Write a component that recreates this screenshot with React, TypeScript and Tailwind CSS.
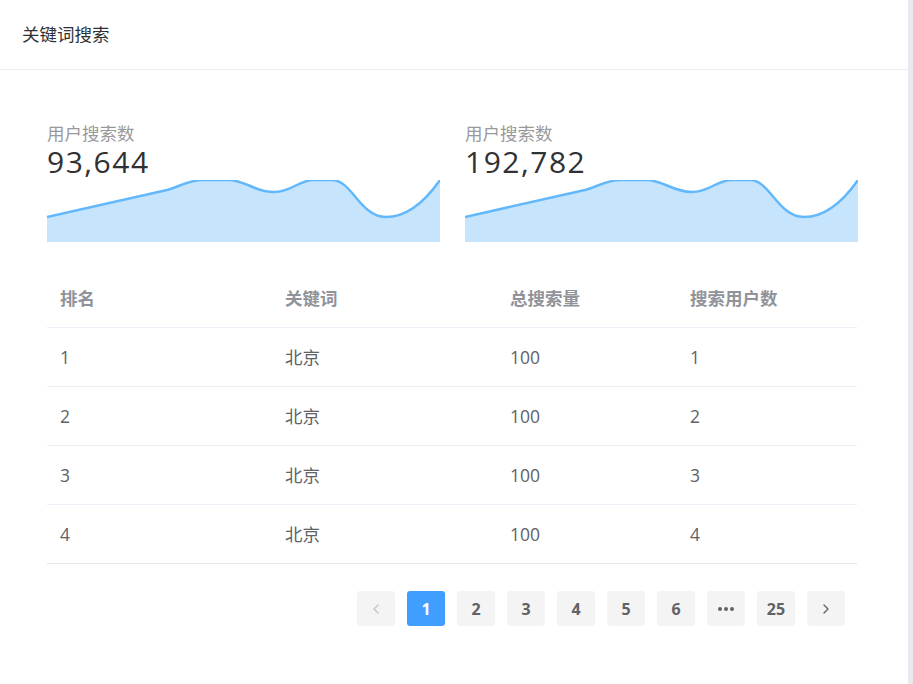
import { ChevronLeft, ChevronRight } from "lucide-react";

type Stat = { label: string; value: string };

const stats: Stat[] = [
  { label: "用户搜索数", value: "93,644" },
  { label: "用户搜索数", value: "192,782" },
];

const rows = [
  { rank: 1, word: "北京", total: 100, users: 1 },
  { rank: 2, word: "北京", total: 100, users: 2 },
  { rank: 3, word: "北京", total: 100, users: 3 },
  { rank: 4, word: "北京", total: 100, users: 4 },
];

const pages = ["1", "2", "3", "4", "5", "6", "…", "25"];

const font = { fontFamily: '"Open Sans", "Noto Sans CJK SC", sans-serif' };

// smooth area line, local coords 393 x 62
const linePath =
  "M0,37 L120,10 C134,6 142,0 156,0 L181,0 C199,0 207,12 227,12 C245,12 251,0 267,0 L285,0 C305,0 313,37 339,37 C360,37 379,20 393,0";

function MiniArea() {
  return (
    <svg width="393" height="62" viewBox="0 0 393 62" className="block">
      <path d={`${linePath} L393,62 L0,62 Z`} fill="#c6e5fd" />
      <path d={linePath} fill="none" stroke="#62b8fb" strokeWidth="2.5" />
    </svg>
  );
}

function StatCard({ stat }: { stat: Stat }) {
  return (
    <div className="w-[393px]">
      <div className="h-6 text-[17.5px] leading-6 text-[#999]">{stat.label}</div>
      <div className="h-[34px] text-[30px] leading-[34px] tracking-[1.5px] text-[#303133]">
        {stat.value}
      </div>
      <div className="mt-px">
        <MiniArea />
      </div>
    </div>
  );
}

function PageBtn({ children, active }: { children: React.ReactNode; active?: boolean }) {
  return (
    <div
      className={
        active
          ? "flex h-[35px] w-[38px] items-center justify-center rounded-[3px] bg-[#409eff] text-[16px] font-bold text-white"
          : "flex h-[35px] w-[38px] items-center justify-center rounded-[3px] bg-[#f4f4f5] text-[16px] font-bold text-[#606266]"
      }
    >
      {children}
    </div>
  );
}

export default function App() {
  return (
    <div className="flex h-[684px] w-[913px] bg-white" style={font}>
      <div className="w-[908px] bg-white">
        <div className="flex h-[70px] items-center border-b border-[#ebeef5] px-[22px] text-[17.5px] text-[#303133]">
          关键词搜索
        </div>
        <div className="pl-[47px] pr-[51px] pt-[51px]">
          <div className="flex gap-[25px]">
            {stats.map((s, i) => (
              <StatCard key={i} stat={s} />
            ))}
          </div>

          <div className="mt-[27px] border-b border-[#e4e7ed] text-[17.5px]">
            <div className="grid h-[59px] grid-cols-[225px_225px_180px_180px] items-center border-b border-[#ebeef5] font-bold text-[#909399]">
              <div className="px-[13px]">排名</div>
              <div className="px-[13px]">关键词</div>
              <div className="px-[13px]">总搜索量</div>
              <div className="px-[13px]">搜索用户数</div>
            </div>
            {rows.map((r, i) => (
              <div
                key={r.rank}
                className={
                  i < rows.length - 1
                    ? "grid h-[59px] grid-cols-[225px_225px_180px_180px] items-center border-b border-[#ebeef5] text-[#606266]"
                    : "grid h-[58px] grid-cols-[225px_225px_180px_180px] items-center text-[#606266]"
                }
              >
                <div className="px-[13px]">{r.rank}</div>
                <div className="px-[13px]">{r.word}</div>
                <div className="px-[13px]">{r.total}</div>
                <div className="px-[13px]">{r.users}</div>
              </div>
            ))}
          </div>

          <div className="mt-[27px] flex justify-end gap-[12px] pr-[12px]">
            <PageBtn>
              <ChevronLeft size={16} strokeWidth={2} className="text-[#c0c4cc]" />
            </PageBtn>
            {pages.map((p) => (
              <PageBtn key={p} active={p === "1"}>
                {p === "…" ? (
                  <span className="flex gap-[2px]">
                    <span className="h-[4px] w-[4px] rounded-full bg-[#606266]" />
                    <span className="h-[4px] w-[4px] rounded-full bg-[#606266]" />
                    <span className="h-[4px] w-[4px] rounded-full bg-[#606266]" />
                  </span>
                ) : (
                  p
                )}
              </PageBtn>
            ))}
            <PageBtn>
              <ChevronRight size={16} strokeWidth={2} className="text-[#606266]" />
            </PageBtn>
          </div>
        </div>
      </div>
      <div className="w-[5px] bg-[#e9e9ef]" />
    </div>
  );
}
